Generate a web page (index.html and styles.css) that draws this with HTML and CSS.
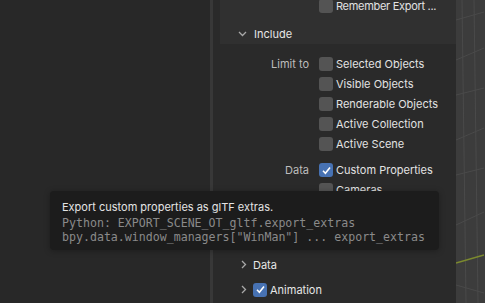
FILE: index.html
```html
<!DOCTYPE html>
<html>
<head>
<meta charset="utf-8">
<link rel="stylesheet" href="styles.css">
</head>
<body>
<div class="screen">
  <div class="left"></div>
  <div class="divider"></div>
  <div class="panel">
    <div class="head-box">
      <div class="row top-row">
        <span class="label"></span>
        <span class="cb"></span><span class="txt tight">Remember Export ...</span>
      </div>
      <div class="header">
        <svg class="chev" width="9" height="6" viewBox="0 0 9 6"><path d="M1 1 L4.5 4.5 L8 1" fill="none" stroke="#a8a8a8" stroke-width="1.3"/></svg>
        <span class="htxt">Include</span>
      </div>
    </div>
    <div class="body">
      <div class="group">
        <div class="row"><span class="label">Limit to</span><span class="cb"></span><span class="txt">Selected Objects</span></div>
        <div class="row"><span class="label"></span><span class="cb"></span><span class="txt">Visible Objects</span></div>
        <div class="row"><span class="label"></span><span class="cb"></span><span class="txt">Renderable Objects</span></div>
        <div class="row"><span class="label"></span><span class="cb"></span><span class="txt">Active Collection</span></div>
        <div class="row"><span class="label"></span><span class="cb"></span><span class="txt">Active Scene</span></div>
      </div>
      <div class="group">
        <div class="row"><span class="label">Data</span><span class="cb on"><svg width="13" height="13" viewBox="0 0 13 13"><path d="M3 6.8 L5.4 9.2 L10 3.6" fill="none" stroke="#fff" stroke-width="1.6"/></svg></span><span class="txt">Custom Properties</span></div>
        <div class="row"><span class="label"></span><span class="cb"></span><span class="txt">Cameras</span></div>
        <div class="row"><span class="label"></span><span class="cb"></span><span class="txt">Punctual Lights</span></div>
      </div>
      <div class="sub">
        <div class="subhead">
          <svg class="chev" width="6" height="9" viewBox="0 0 6 9"><path d="M1 1 L4.5 4.5 L1 8" fill="none" stroke="#a8a8a8" stroke-width="1.3"/></svg>
          <span class="htxt">Data</span>
        </div>
        <div class="subhead">
          <svg class="chev" width="6" height="9" viewBox="0 0 6 9"><path d="M1 1 L4.5 4.5 L1 8" fill="none" stroke="#a8a8a8" stroke-width="1.3"/></svg>
          <span class="cb on"><svg width="13" height="13" viewBox="0 0 13 13"><path d="M3 6.8 L5.4 9.2 L10 3.6" fill="none" stroke="#fff" stroke-width="1.6"/></svg></span>
          <span class="htxt">Animation</span>
        </div>
      </div>
    </div>
  </div>
  <div class="viewport">
    <svg width="28" height="303" viewBox="0 0 28 303">
      <g stroke="#4a4a4a" stroke-width="1" fill="none">
        <path d="M0 20 L28 12"/>
        <path d="M0 60 L28 48"/>
        <path d="M0 95 L28 88"/>
        <path d="M0 140 L28 128"/>
        <path d="M0 175 L28 168"/>
        <path d="M0 225 L28 212"/>
        <path d="M0 285 L28 293"/>
        <path d="M6 0 L10 303"/>
        <path d="M18 0 L22 303"/>
      </g>
      <path d="M0 263 L28 255" stroke="#7c8a2e" stroke-width="1.5" fill="none"/>
    </svg>
  </div>
  <div class="tooltip">
    <div class="tt-title">Export custom properties as glTF extras.</div>
    <div class="tt-py">Python: EXPORT_SCENE_OT_gltf.export_extras</div>
    <div class="tt-py">bpy.data.window_managers["WinMan"] ... export_extras</div>
  </div>
</div>
</body>
</html>
```

FILE: styles.css
```css
html, body {
  margin: 0;
  padding: 0;
  background: #282828;
}
.screen {
  position: relative;
  display: flex;
  width: 485px;
  height: 303px;
  overflow: hidden;
  font-family: Inter, "Noto Sans", sans-serif;
  font-size: 11px;
  color: #e2e2e2;
}
.left {
  width: 210px;
  background: #282828;
}
.divider {
  width: 3px;
  background: #383838;
}
.panel {
  width: 243px;
  background: #2a2a2a;
  display: flex;
  flex-direction: column;
}
.head-box {
  margin-left: 7px;
  height: 44px;
  background: #303030;
  display: flex;
  flex-direction: column;
}
.top-row {
  margin-top: -4px;
  margin-left: -7px;
}
.row {
  display: flex;
  align-items: center;
  height: 20px;
}
.label {
  width: 96px;
  text-align: right;
  padding-right: 10px;
  color: #bdbdbd;
}
.cb {
  width: 14px;
  height: 14px;
  border-radius: 3px;
  background: #545454;
  margin-right: 3px;
  flex: none;
  display: flex;
  align-items: center;
  justify-content: center;
}
.cb.on {
  background: #4772b3;
}
.cb svg {
  display: block;
}
.txt {
  white-space: nowrap;
}
.txt.tight {
  letter-spacing: -0.3px;
}
.header {
  display: flex;
  align-items: center;
  height: 21px;
  margin-top: 7px;
  padding-left: 18px;
}
.header .chev {
  margin-right: 7px;
}
.htxt {
  color: #e6e6e6;
}
.body {
  display: flex;
  flex-direction: column;
  padding-top: 10px;
}
.group + .group {
  margin-top: 6px;
}
.sub {
  margin-top: 32px;
  display: flex;
  flex-direction: column;
}
.subhead {
  display: flex;
  align-items: center;
  height: 25px;
  padding-left: 28px;
}
.subhead .chev {
  margin-right: 6px;
}
.viewport {
  flex: 1;
  background: #3c3c3c;
}
.viewport svg {
  display: block;
}
.tooltip {
  position: absolute;
  left: 50px;
  top: 191px;
  width: 389px;
  height: 59px;
  box-sizing: border-box;
  background: #1c1c1c;
  border-radius: 4px;
  padding: 8px 12px;
  box-shadow: 0 1px 6px rgba(0,0,0,0.3);
}
.tt-title {
  color: #e4e4e4;
  font-size: 11px;
  line-height: 16px;
  margin-bottom: 1px;
}
.tt-py {
  font-family: "DejaVu Sans Mono", monospace;
  font-size: 11.6px;
  line-height: 14px;
  color: #8a8a8a;
  white-space: nowrap;
}
```
